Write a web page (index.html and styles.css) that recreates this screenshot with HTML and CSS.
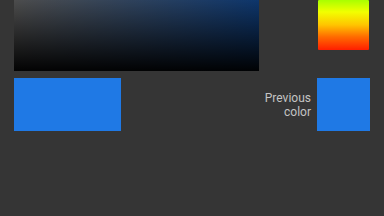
FILE: index.html
```html
<!DOCTYPE html>
<html lang="en">
  <head>
    <meta charset="UTF-8" />
    <meta name="viewport" content="width=device-width, initial-scale=1.0" />
    <title>Color Picker</title>
    <link rel="stylesheet" href="styles.css">
  </head>
  <body>
    <div class="picker">
      <div class="top-row">
        <div class="sv-square"></div>
        <div class="hue-bar"></div>
      </div>

      <div class="bottom-row">
        <div class="swatch current"></div>
        <div class="previous">
          <span class="previous-label">Previous<br />color</span>
          <div class="swatch small"></div>
        </div>
      </div>
    </div>
  </body>
</html>
```

FILE: styles.css
```css
body {
  margin: 0;
  background-color: #353535;
  font-family: Roboto, "Liberation Sans", sans-serif;
}
.picker {
  padding: 0 14px;
}
.top-row {
  display: flex;
  justify-content: space-between;
  align-items: flex-start;
  height: 71px;
}
.sv-square {
  width: 245px;
  height: 71px;
  background:
    linear-gradient(to bottom, rgba(0, 0, 0, 0.1), rgba(0, 0, 0, 0.97)),
    linear-gradient(to right, #555555, #0f3c78);
}
.hue-bar {
  width: 51px;
  height: 50px;
  margin-right: 1px;
  border-radius: 1px;
  background: linear-gradient(
    to bottom,
    #a8ff00 0%,
    #f2ff00 24%,
    #ffc400 50%,
    #ff6a00 74%,
    #ff1e00 100%
  );
}
.bottom-row {
  display: flex;
  justify-content: space-between;
  align-items: center;
  margin-top: 7px;
}
.swatch {
  background-color: #1f79e5;
}
.current {
  width: 107px;
  height: 53px;
}
.previous {
  display: flex;
  align-items: center;
  gap: 6px;
}
.previous-label {
  text-align: right;
  font-size: 12px;
  line-height: 14px;
  color: #c4c4c4;
}
.small {
  width: 53px;
  height: 53px;
}
```
